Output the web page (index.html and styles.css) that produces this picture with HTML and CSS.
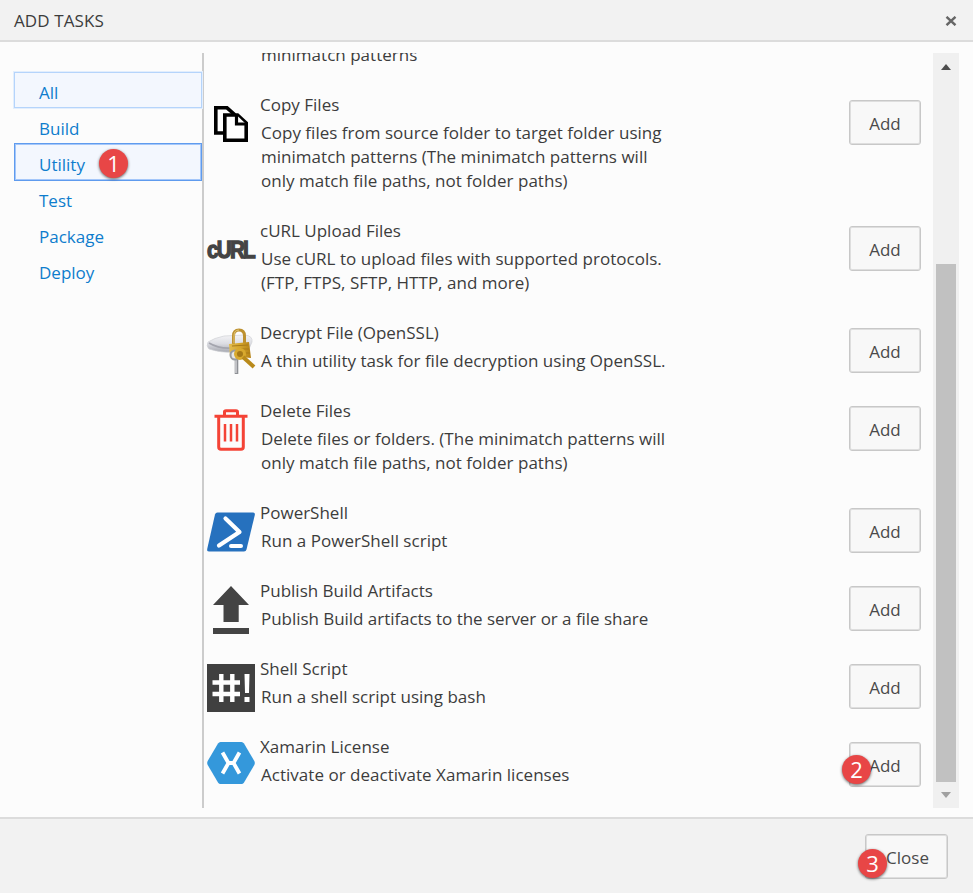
FILE: index.html
```html
<!DOCTYPE html>
<html lang="en">
<head>
<meta charset="utf-8">
<title>Add Tasks</title>
<link rel="stylesheet" href="styles.css">
</head>
<body>
<div class="dialog">
  <header class="head">
    <h1>ADD TASKS</h1>
    <svg class="dismiss" viewBox="0 0 12 10"><path d="M1.5 .8 10.5 9.2M10.5 .8 1.5 9.2"/></svg>
  </header>
  <main class="body">
    <nav class="nav">
      <a class="active">All</a>
      <a>Build</a>
      <a class="focused">Utility<span class="badge b1">1</span></a>
      <a>Test</a>
      <a>Package</a>
      <a>Deploy</a>
    </nav>
    <section class="list">
      <article class="task partial"><div class="text"><p>minimatch patterns</p></div></article>

      <article class="task">
        <svg class="icon" viewBox="0 0 48 48"><g fill="#fff" stroke="#000" stroke-width="3.6"><path d="M8.8 7.8H20L27 14V33H8.8Z"/><path d="M17.8 15H30.5L39.2 23V40.2H17.8Z"/><path d="M29.5 15V24H39" stroke-width="3.2"/></g></svg>
        <div class="text"><h2>Copy Files</h2><p>Copy files from source folder to target folder using<br>minimatch patterns (The minimatch patterns will<br>only match file paths, not folder paths)</p></div>
        <button>Add</button>
      </article>

      <article class="task">
        <svg class="icon" viewBox="0 0 48 48"><text class="curl" x="0" y="32" textLength="47" lengthAdjust="spacingAndGlyphs">cURL</text></svg>
        <div class="text"><h2>cURL Upload Files</h2><p>Use cURL to upload files with supported protocols.<br>(FTP, FTPS, SFTP, HTTP, and more)</p></div>
        <button>Add</button>
      </article>

      <article class="task">
        <svg class="icon" viewBox="0 0 48 48">
          <defs>
            <linearGradient id="silver" x2="0" y2="1"><stop stop-color="#f4f4f6"/><stop offset=".5" stop-color="#dcdde3"/><stop offset="1" stop-color="#a6a8b0"/></linearGradient>
            <linearGradient id="gold"><stop stop-color="#e3bd50"/><stop offset=".5" stop-color="#d4a52b"/><stop offset="1" stop-color="#b58216"/></linearGradient>
          </defs>
          <path d="M1 14Q7 10 17 8L38 7Q46 8 45 14L42 21 25 24Q15 25 2 21Q-1 18 1 14Z" fill="url(#silver)" stroke="#d0d1d6" stroke-width=".7"/>
          <path d="M2 15Q12 21 25 20" fill="none" stroke="#a4a5ae" stroke-width="1.8"/>
          <path d="M26.5 16V8Q26.5 2 32 2T37.500 8V16" fill="none" stroke="#bd9130" stroke-width="3"/>
          <path d="M27 15V8Q27 2 32 2" fill="none" stroke="#e2c77a" stroke-width="1"/>
          <path d="M22 16 42 14 44 30 23 28Z" fill="url(#gold)"/>
          <path d="M25 18 41 17M34 21H42M36 25H43" stroke="#a97b18" stroke-width="1"/>
          <path d="M29.500 30V46" stroke="#8d9095" stroke-width="3.600"/>
          <path d="M29 30V45" stroke="#e4e5e8" stroke-width="1.200"/>
          <circle cx="28" cy="27" r="4.500" fill="#e5e5e5" stroke="#999ca1" stroke-width="2"/>
          <circle cx="33" cy="26" r="4.500" fill="#a57918" stroke="#d8a92e" stroke-width="3"/>
          <path d="M36 29 47 39" stroke="#b98a1b" stroke-width="4"/>
        </svg>
        <div class="text"><h2>Decrypt File (OpenSSL)</h2><p>A thin utility task for file decryption using OpenSSL.</p></div>
        <button>Add</button>
      </article>

      <article class="task">
        <svg class="icon" viewBox="0 0 48 48"><g fill="none" stroke="#f44336" stroke-width="3"><path d="M7.500 10.300H40.500M17.500 10V6Q17.500 4.700 19 4.700H29Q30.500 4.700 30.500 6V10"/><path d="M11.700 11V41Q11.700 43.300 14 43.300H34Q36.300 43.300 36.300 41V11"/><path d="M18 18V35.500M24 18V35.500M30 18V35.500" stroke-width="2.500"/></g></svg>
        <div class="text"><h2>Delete Files</h2><p>Delete files or folders. (The minimatch patterns will<br>only match file paths, not folder paths)</p></div>
        <button>Add</button>
      </article>

      <article class="task">
        <svg class="icon" viewBox="0 0 48 48"><path d="M10.500 4.500H46Q48.300 4.500 47.800 7L39.500 41.500Q39 43.500 37 43.500H2Q-.3 43.500.2 41L8 6.500Q8.500 4.500 10.500 4.500Z" fill="#2671be"/><path d="M18.500 10.500 32.500 24 12 37.500" fill="none" stroke="#fff" stroke-width="4.200" stroke-linecap="round" stroke-linejoin="round"/><path d="M24 38H34" stroke="#fff" stroke-width="4" stroke-linecap="round"/></svg>
        <div class="text"><h2>PowerShell</h2><p>Run a PowerShell script</p></div>
        <button>Add</button>
      </article>

      <article class="task">
        <svg class="icon" viewBox="0 0 48 48"><path d="M24 0 42 19H31.700V36H16.500V19H6ZM6 42H42V48H6Z" fill="#444"/></svg>
        <div class="text"><h2>Publish Build Artifacts</h2><p class="tight">Publish Build artifacts to the server or a file share</p></div>
        <button>Add</button>
      </article>

      <article class="task">
        <svg class="icon" viewBox="0 0 48 48"><path d="M0 0H48V48H0Z" fill="#404040"/><path d="M14.300 10V38M25.300 10V38M5.500 18.500H33M5.500 30H33" stroke="#fff" stroke-width="4.400"/><path d="M37.500 10H42.500L42 29H38ZM37.500 33H42.500V38H37.500Z" fill="#fff"/></svg>
        <div class="text"><h2>Shell Script</h2><p>Run a shell script using bash</p></div>
        <button>Add</button>
      </article>

      <article class="task">
        <svg class="icon" viewBox="0 0 48 48"><path d="M13.500 0H34.500Q36 0 37 1.500L47.300 19Q48.300 21 47.300 23L37 40.500Q36 42 34.500 42H13.500Q12 42 11 40.500L.7 23Q-.3 21 .7 19L11 1.500Q12 0 13.500 0Z" fill="#3498db"/><path d="M15.500 10.500 21.500 21 15.500 31.500M32.500 10.500 26.500 21 32.500 31.500M21.500 21H26.500" fill="none" stroke="#fff" stroke-width="3.800"/></svg>
        <div class="text"><h2>Xamarin License</h2><p>Activate or deactivate Xamarin licenses</p></div>
        <button>Add<span class="badge b2">2</span></button>
      </article>
    </section>
    <div class="scroll">
      <svg viewBox="0 0 10 6"><path d="M5 0 10 6H0Z" fill="#4d4d4d"/></svg>
      <div class="thumb"></div>
      <svg viewBox="0 0 10 6"><path d="M0 0H10L5 6Z" fill="#a0a0a0"/></svg>
    </div>
  </main>
  <footer class="foot"><button class="close">Close<span class="badge b3">3</span></button></footer>
</div>
</body>
</html>
```
FILE: styles.css
```css
* { box-sizing: border-box; }
body { margin: 0; font-family: "Open Sans", "Noto Sans", sans-serif; font-size: 17px; color: #3c3c3c; }
.dialog { width: 973px; height: 893px; display: flex; flex-direction: column; background: #fcfcfc; overflow: hidden; }
.head { height: 42px; flex: none; display: flex; align-items: center; justify-content: space-between; padding: 1px 16px 0 14px; background: #f2f2f2; border-bottom: 2px solid #dcdcdc; }
h1 { margin: 0; font-size: 17px; font-weight: 400; letter-spacing: .1px; }
.dismiss { width: 12px; height: 10px; margin-top: 1px; fill: none; stroke: #666; stroke-width: 2.4; }
.body { flex: 1; min-height: 0; display: flex; padding: 11px 14px 9px 14px; }
.nav { width: 190px; flex: none; padding-top: 19px; border-right: 2px solid #ccc; }
.nav a { display: block; position: relative; height: 36px; line-height: 39px; padding-left: 24px; border: 1px solid transparent; color: #0e7dcd; letter-spacing: 0; }
.nav .active { background: #f3f7fe; border-color: #b5d4fb; box-shadow: 0 0 0 1px #e2eefd; }
.nav .focused { background: #f3f7fe; border-color: #5f9bee; height: 38px; margin: -1px 0; line-height: 41px; box-shadow: inset 0 0 0 1px #a4c7fa; }
.list { flex: 1; min-width: 0; overflow: hidden; padding-left: 3px; }
.task { display: flex; align-items: flex-start; padding-bottom: 26px; }
.partial { margin-top: -10px; padding-left: 48px; }
.icon { width: 48px; height: 48px; margin: 7px 0 -3px; flex: none; overflow: visible; }
.curl { font: bold 23px "Liberation Sans", sans-serif; letter-spacing: -2px; fill: #444; stroke: #444; stroke-width: 1.3px; }
.text { flex: 1; padding-left: 5px; }
h2, p { margin: 0; font-size: 17px; font-weight: 400; line-height: 24px; white-space: nowrap; }
h2 { margin-bottom: 4px; letter-spacing: 0; }
p { padding-left: 1px; letter-spacing: .02px; }
.tight { letter-spacing: -.04px; }
button { position: relative; width: 72px; height: 45px; margin: 7px 12px 0 0; padding: 1px 0 0; flex: none; background: #f8f8f8; border: 1px solid #c8c8c8; box-shadow: inset 0 0 0 1px #dedede; border-radius: 3px; color: #4a4a4a; font: inherit; }
.scroll { width: 26px; flex: none; display: flex; flex-direction: column; align-items: center; justify-content: space-between; background: #f0f0f0; padding: 11px 0 10px; }
.scroll svg { width: 10px; height: 6px; }
.thumb { width: 20px; height: 518px; margin-top: 183px; background: #c1c1c1; }
.foot { height: 76px; flex: none; display: flex; justify-content: flex-end; padding: 15px 25px 0 0; background: #f2f2f2; border-top: 2px solid #dcdcdc; }
.foot .close { width: 83px; margin: 0; padding-left: 2px; }
.badge { position: absolute; width: 29px; height: 29px; border-radius: 50%; background: #e84646; color: #fff; font: 22px/28px "Open Sans", sans-serif; text-align: center; letter-spacing: 0; box-shadow: 0 1px 3px #0009; }
.b1 { left: 84px; top: 5px; }
.b2 { left: -8px; top: 12px; }
.b3 { left: -8px; top: 14px; }
```
